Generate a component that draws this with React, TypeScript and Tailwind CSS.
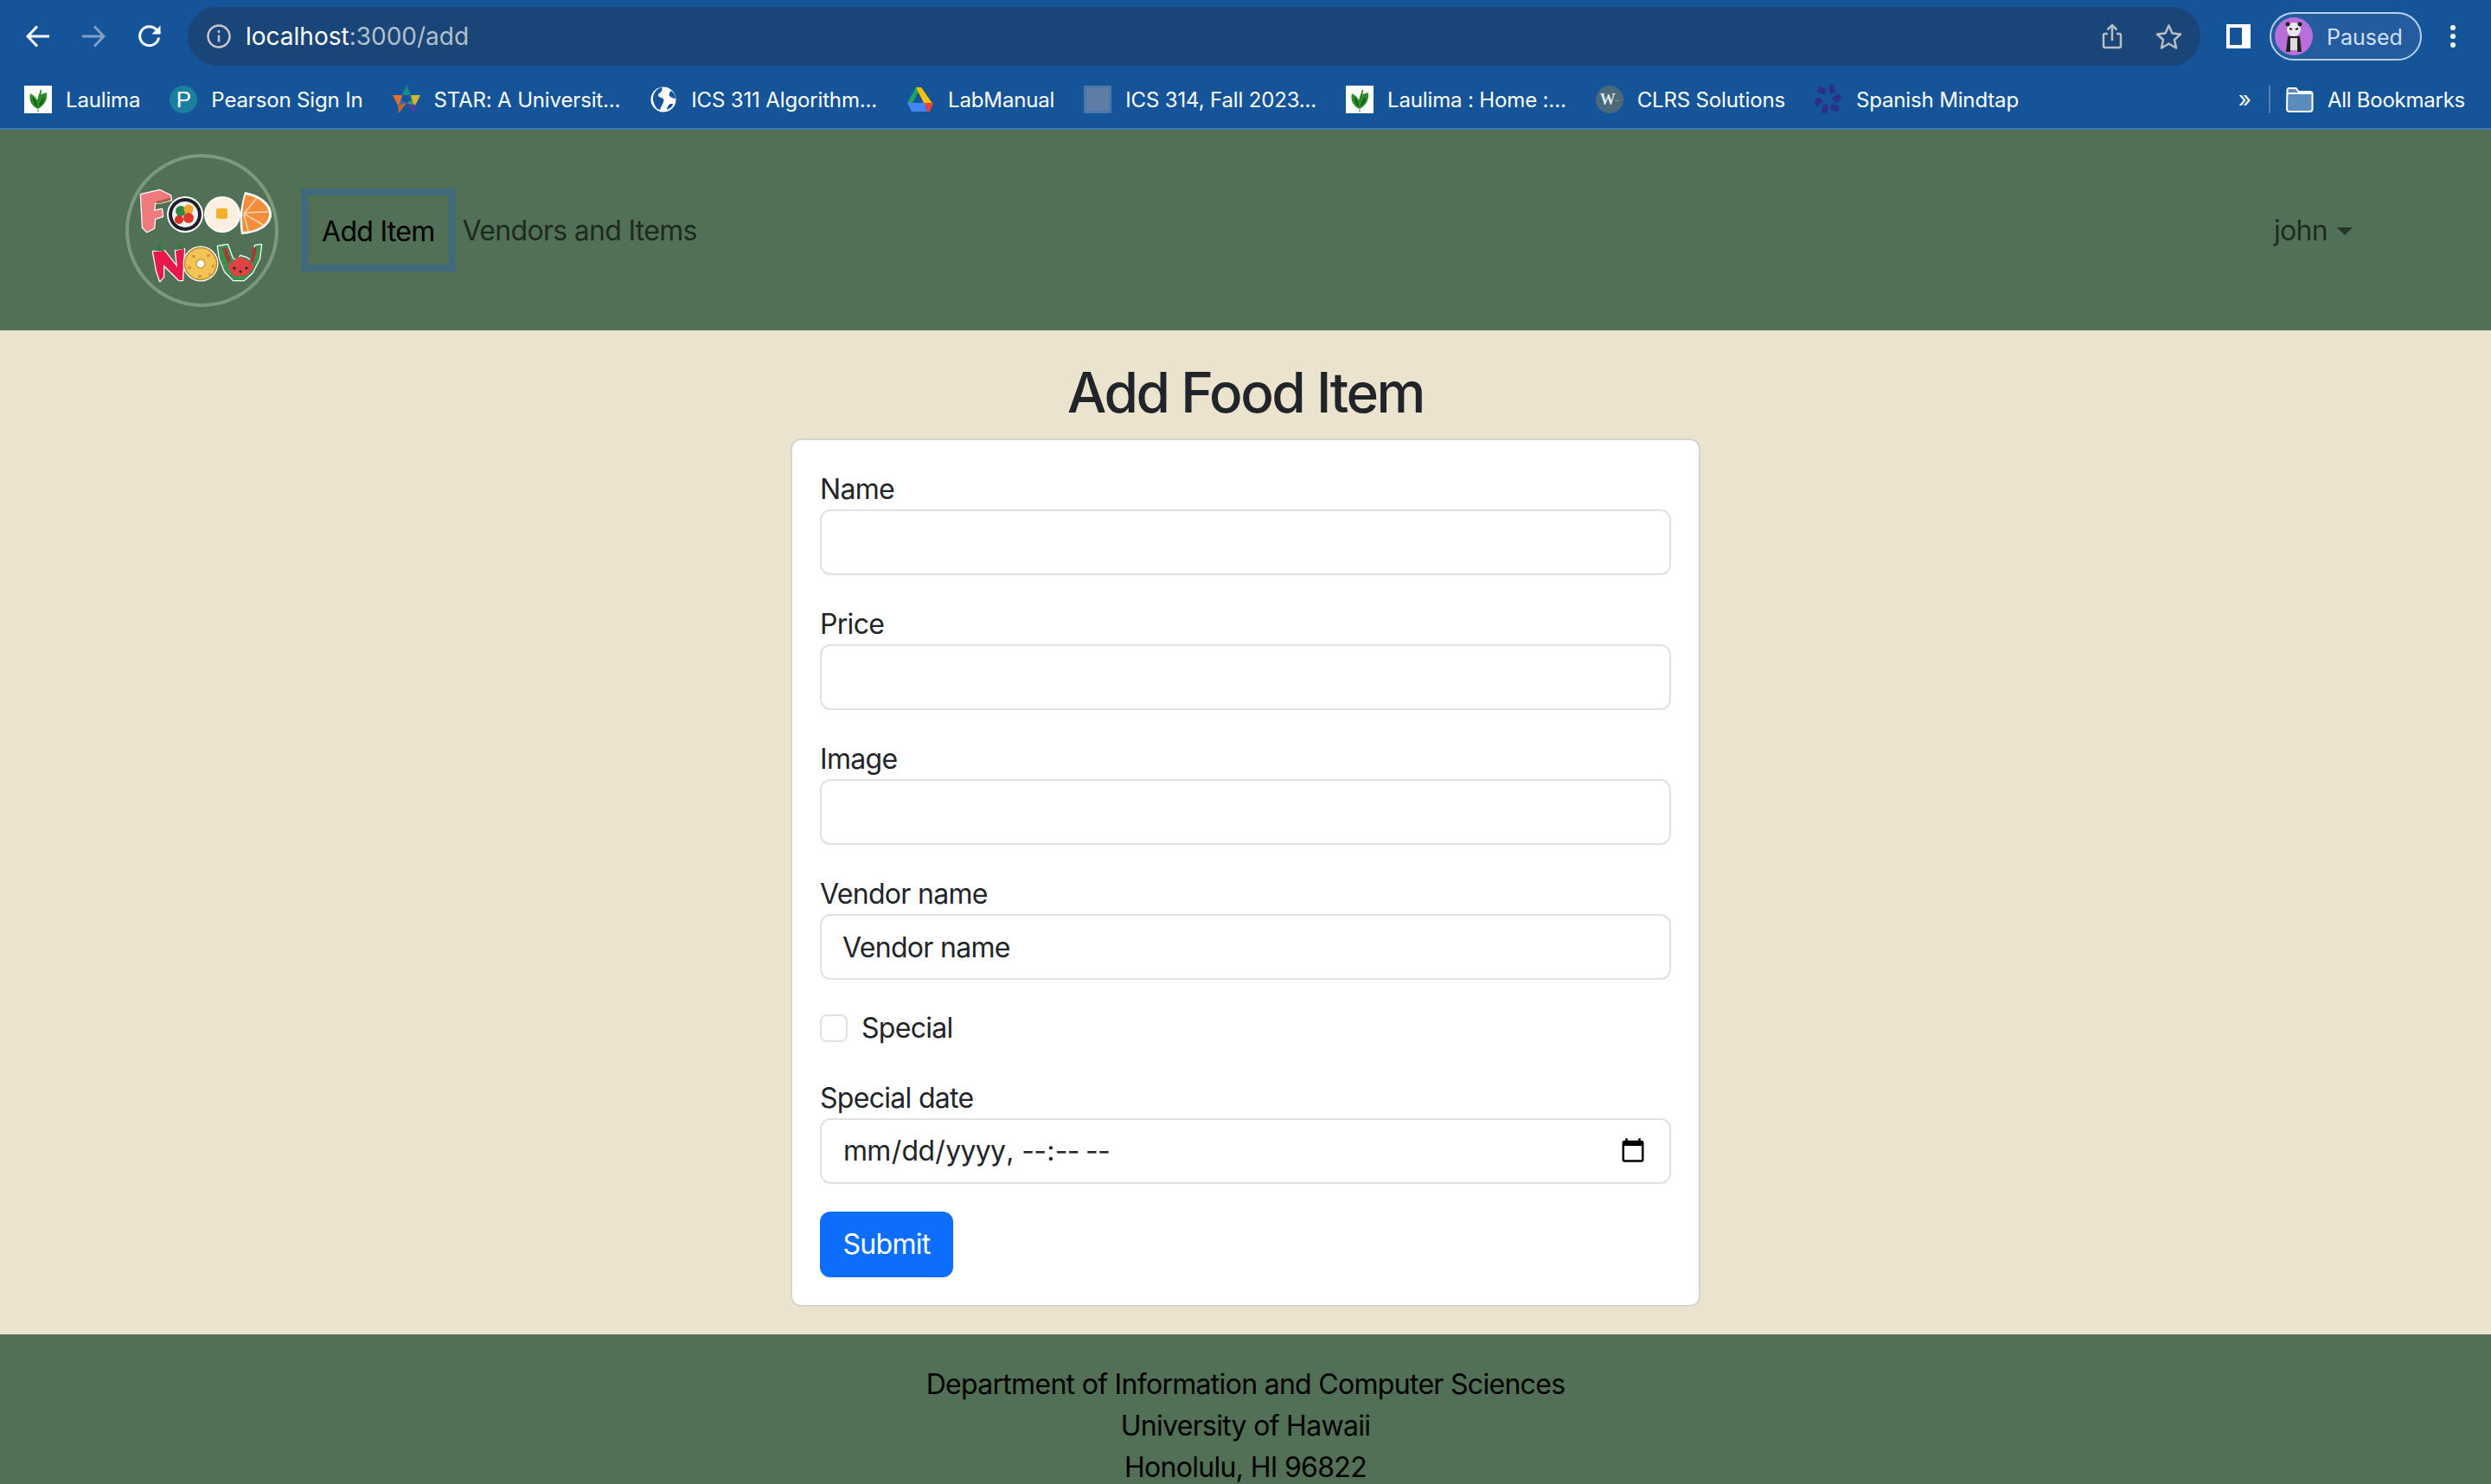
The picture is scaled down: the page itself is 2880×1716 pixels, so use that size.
import React from "react";

const Leaf = () => (
  <span className="flex h-8 w-8 shrink-0 items-center justify-center bg-white">
    <svg width="32" height="32" viewBox="0 0 32 32">
      <path d="M16 27C9 24 5 18 7 9c3 2 6 3 8 8 1-5 3-9 4-13 2 2 1 4 0 6 3-1 5-1 7-2 1 9-3 15-10 19z" fill="#2f8a2c" />
      <path d="M15 26c-3-4-5-9-5-13 3 3 5 7 5 13zM17 24c1-5 3-8 6-11 0 5-2 9-6 11z" fill="#14600f" />
      <path d="M16 26v5" stroke="#9dc79a" strokeWidth="2" />
    </svg>
  </span>
);
const Pearson = () => (
  <span className="flex h-8 w-8 shrink-0 items-center justify-center rounded-full bg-[#1b7f9f] font-['Liberation_Sans',sans-serif] text-[26px] leading-none text-white">P</span>
);
const Star = () => (
  <svg width="32" height="34" viewBox="0 0 32 34" className="shrink-0">
    <path d="M16 0l5 12H11z" fill="#1d8a8a" />
    <path d="M0 12h11l-2 9-3 3z" fill="#e0702c" />
    <path d="M32 12H21l2 9 3 3z" fill="#d9b52e" />
    <path d="M11 12l-3 10 2 3 6-4z" fill="#2f6fb5" />
    <path d="M21 12l3 10-2 3-6-4z" fill="#3f9a6a" />
    <path d="M6 24l10-3-9 12z" fill="#d0602c" />
    <path d="M26 24l-10-3 9 12z" fill="#5a3d9c" />
    <path d="M12 13h8l2 5-6 3-6-3z" fill="#15539a" />
  </svg>
);
const Globe = () => (
  <svg width="32" height="32" viewBox="0 0 32 32" className="shrink-0">
    <circle cx="16" cy="16" r="14.5" fill="#fff" />
    <path d="M14 2c2 3-1 6-3 7-2 2-1 4 2 5 3 0 4 2 3 5-1 3-3 5-4 9l-3-1c-4-5-5-9-5-12C4 9 8 4 14 2zM30 15c-2 0-5-1-7-3-1-2 0-4 2-6 3 2 5 5 5 9zM27 21c0 3-3 5-7 7 0-3 2-6 4-7z" fill="#15539a" />
  </svg>
);
const Drive = () => (
  <svg width="32" height="32" viewBox="0 0 32 32" className="shrink-0">
    <path d="M11 2h6L6 22 1 20z" fill="#1ea362" />
    <path d="M17 2l14 20h-10L11 2z" fill="#ffc107" />
    <path d="M1 20l5 10h18l-3-10z" fill="#4285f4" />
    <path d="M21 20h10l-4 10h-3z" fill="#ea4335" />
  </svg>
);
const SquareFav = () => (
  <span className="h-8 w-8 shrink-0 border-[3px] border-[#4c77a8] bg-[#5e7ea8]" />
);
const WFav = () => (
  <span className="flex h-8 w-8 shrink-0 items-center justify-center rounded-full bg-[#4a6a7a] font-['Liberation_Serif',serif] text-[18px] font-bold leading-none text-[#dde5ea]">W<span className="text-[8px] font-normal">..</span></span>
);
const Mindtap = () => (
  <svg width="32" height="36" viewBox="0 0 32 36" className="shrink-0" fill="#2c2f85">
    <rect x="4" y="4" width="9" height="7" transform="rotate(20 8 7)" />
    <rect x="17" y="1" width="6" height="10" transform="rotate(-10 20 6)" />
    <rect x="23" y="12" width="7" height="9" transform="rotate(45 26 16)" />
    <rect x="19" y="24" width="9" height="7" transform="rotate(20 23 27)" />
    <rect x="9" y="24" width="6" height="10" transform="rotate(10 12 29)" />
    <rect x="1" y="16" width="7" height="9" transform="rotate(45 4 20)" />
  </svg>
);

const bookmarks: [React.ReactNode, string][] = [
  [<Leaf />, "Laulima"],
  [<Pearson />, "Pearson Sign In"],
  [<Star />, "STAR: A Universit..."],
  [<Globe />, "ICS 311 Algorithm..."],
  [<Drive />, "LabManual"],
  [<SquareFav />, "ICS 314, Fall 2023..."],
  [<Leaf />, "Laulima : Home :..."],
  [<WFav />, "CLRS Solutions"],
  [<Mindtap />, "Spanish Mindtap"],
];

const Logo = () => (
  <svg width="177" height="177" viewBox="0 0 177 177" className="shrink-0">
    <circle cx="88.5" cy="88.5" r="86.5" fill="none" stroke="#7b9881" strokeWidth="4" />
    <g stroke="#fff" strokeWidth="2.5" strokeLinejoin="round" paintOrder="stroke">
      <path d="M18 47l22-5 12 6 1 5-11 3-8 1-1 9 9-2 1 8-9 3-1 11-8 4-5-5z" fill="#ef7a7e" />
      <path d="M52 52l-10 3-6 1" fill="none" stroke="#a9603f" strokeWidth="3" />
    </g>
    <g>
      <circle cx="69" cy="70" r="21" fill="#fff" />
      <circle cx="69" cy="70" r="19" fill="#20202a" />
      <circle cx="69" cy="70" r="15" fill="#eef0f2" />
      <circle cx="64" cy="66" r="6" fill="#2f8a3f" />
      <circle cx="73" cy="64" r="5.5" fill="#f0a62a" />
      <circle cx="73" cy="74" r="6" fill="#e03a2a" />
      <circle cx="62" cy="76" r="5" fill="#d8332a" />
      <circle cx="112" cy="70" r="21" fill="#fff" />
      <circle cx="112" cy="70" r="19" fill="#fbf0df" />
      <rect x="105" y="63" width="13" height="12" rx="2" fill="#f6ae2d" />
      <path d="M138 44C157 47 169 58 169 70c0 11-11 21-35 23-3-17-1-33 4-49z" fill="#fff" />
      <path d="M139 47C155 50 166 60 166 70c0 9-10 19-30 20-2-15-1-29 3-43z" fill="#f58e3c" />
      <path d="M137 68l28-1M137 69l22 13M137 69l14-17M137 70l5 19" stroke="#fcd9b5" strokeWidth="1.5" />
    </g>
    <g strokeLinejoin="round">
      <path d="M32 113l13-1 15 19-2-19 10-2-1 18-1 18h-4L44 128v14l-4 5-4-12z" fill="#e8174c" stroke="#fff" strokeWidth="2.5" paintOrder="stroke" />
      <path d="M34 112l4-4 1-5 2 0 1 5 3 4zM58 111l4-4 0-5 2 0 1 5 3 3z" fill="#2e7d3a" />
      <circle cx="87" cy="127" r="20.5" fill="#fff" />
      <circle cx="87" cy="127" r="18.5" fill="#f1c454" stroke="#b98a2f" strokeWidth="1.5" />
      <circle cx="87" cy="127" r="5" fill="#fff" stroke="#c99a3a" strokeWidth="1.5" />
      <path d="M77 117h4v3h-4zM94 116h4v3h-4zM100 128h3v4h-3zM72 130h4v3h-4zM84 140h4v3h-4zM96 138h3v3h-3z" fill="#d29a3a" />
      <path d="M107 107l11-2 6 16 6 3 3-6 7 2 6 4 4-18 7-1-2 16-8 16-10 9h-12l-10-10-6-15z" fill="#3e8f4f" stroke="#fff" strokeWidth="2.5" paintOrder="stroke" />
      <path d="M112 109l5 0 5 15-4 2zM152 108l-4 0-4 16 4 2z" fill="#a83a34" />
      <path d="M118 130l8-7 5-4 8 2 7 6 3 3-8 10-6 1h-10z" fill="#dd4343" />
      <circle cx="126" cy="132" r="1.6" fill="#222" /><circle cx="133" cy="136" r="1.6" fill="#222" /><circle cx="140" cy="132" r="1.6" fill="#222" />
    </g>
  </svg>
);

const Field = ({ label, value, type = "text" }: { label: string; value?: string; type?: string }) => (
  <div className="mb-8">
    <label className="block h-[48px] pt-[2px] text-[32px] leading-[46px]">{label}</label>
    <input
      type={type}
      defaultValue={value}
      readOnly={type === "text"}
      className="block h-[76px] w-full rounded-[12px] border-2 border-[#dee2e6] bg-white px-[24px] text-[32px] leading-[48px] text-[#212529] outline-none"
    />
  </div>
);

export default function App() {
  return (
    <div className="flex h-[1716px] flex-col overflow-hidden bg-[#ebe3cd] font-['Inter','Liberation_Sans',sans-serif] tracking-[-0.7px] text-[#212529]">
      <header className="bg-[#155499] tracking-normal text-white">
        <div className="flex h-[84px] items-center">
          <div className="flex w-[217px] shrink-0 items-center pl-[30px]">
            <svg width="28" height="26" viewBox="0 0 28 26" fill="none" stroke="#fff" strokeWidth="3"><path d="M27 13H2M13 1.5L2 13l11 11.5" /></svg>
            <svg className="ml-[36px]" width="28" height="26" viewBox="0 0 28 26" fill="none" stroke="#7f9fc9" strokeWidth="3"><path d="M1 13h25M15 1.5L26 13 15 24.5" /></svg>
            <svg className="ml-[37px]" width="28" height="28" viewBox="0 0 28 28" fill="none" stroke="#fff" strokeWidth="3"><path d="M24.5 15.5a11 11 0 1 1-3-9.5L26 10.5" /><path d="M26.5 1.500v10h-10z" fill="#fff" stroke="none" /></svg>
          </div>
          <div className="flex h-[68px] w-[2327px] shrink-0 items-center rounded-full bg-[#1a4578] pl-[22px] pr-[21px]">
            <svg width="28" height="28" viewBox="0 0 28 28" fill="none" stroke="#c3c6ca" strokeWidth="2.5"><circle cx="14" cy="14" r="12.5" /><path d="M14 12.5v8M14 7v3" /></svg>
            <span className="ml-[17px] text-[28px] leading-none"><span className="text-white">localhost</span><span className="text-[#b4bfcc]">:3000/add</span></span>
            <span className="flex-1" />
            <svg width="24" height="30" viewBox="0 0 24 30" fill="none" stroke="#b9bec5" strokeWidth="2.5"><path d="M7 12H4a2 2 0 0 0-2 2v12a2 2 0 0 0 2 2h16a2 2 0 0 0 2-2V14a2 2 0 0 0-2-2h-3M12 20V2M6.5 7.5L12 2l5.500 5.500" /></svg>
            <svg className="ml-[38px]" width="31" height="30" viewBox="0 0 31 30" fill="none" stroke="#b9bec5" strokeWidth="2.5" strokeLinejoin="round"><path d="M15.500 2.500l4 9 9.500 1-7 6.500 2 9.500-8.500-5-8.500 5 2-9.500-7-6.500 9.500-1z" /></svg>
          </div>
          <div className="ml-[30px] h-7 w-7 shrink-0 border-y-4 border-l-4 border-r-[10px] border-white" />
          <div className="ml-[22px] flex h-[56px] w-[176px] shrink-0 items-center rounded-full border-2 border-[#b9d0ef] bg-[#245c9f] pl-[4px]">
            <svg width="44" height="44" viewBox="0 0 44 44" className="shrink-0">
              <circle cx="22" cy="22" r="22" fill="#b96fd8" />
              <circle cx="22" cy="14" r="8" fill="#e8e8e8" />
              <circle cx="15" cy="8" r="2.500" fill="#222" /><circle cx="29" cy="8" r="2.500" fill="#222" />
              <path d="M17 13l3 1M27 13l-3 1" stroke="#222" strokeWidth="2" />
              <path d="M15 22h14l2 18h-5v-2h-8v2h-5z" fill="#222" />
              <rect x="18" y="24" width="8" height="14" fill="#ddd" />
            </svg>
            <span className="ml-[16px] pt-[2px] text-[25px] leading-none text-[#cfe0f8]">Paused</span>
          </div>
          <div className="ml-[33px] flex flex-col gap-[4px]">
            <span className="h-[6px] w-[6px] rounded-full bg-white" />
            <span className="h-[6px] w-[6px] rounded-full bg-white" />
            <span className="h-[6px] w-[6px] rounded-full bg-white" />
          </div>
        </div>
        <div className="flex h-[66px] items-center border-b-2 border-[#3c74b4] pb-[2px] pl-[28px] pr-[30px]">
          <div className="flex items-center gap-[34px]">
            {bookmarks.map(([icon, text], i) => (
              <div key={i} className="flex items-center gap-[16px]">
                {icon}
                <span className="whitespace-nowrap pt-[2px] text-[24px] leading-none tracking-[-0.15px]">{text}</span>
              </div>
            ))}
          </div>
          <span className="flex-1" />
          <span className="text-[26px] leading-none">»</span>
          <span className="ml-[20px] h-8 w-[2px] bg-[#4f7db4]" />
          <svg className="ml-[18px]" width="32" height="30" viewBox="0 0 32 30">
            <path d="M1.500 4a2 2 0 0 1 2-2h8l3 4h13a3 3 0 0 1 3 3v17a3 3 0 0 1-3 3H4a3 3 0 0 1-3-3z" fill="#5d8abd" stroke="#fff" strokeWidth="2" />
            <path d="M2 8h28" stroke="#fff" strokeWidth="2" />
          </svg>
          <span className="ml-[16px] whitespace-nowrap pt-[2px] text-[24px] leading-none tracking-[-0.25px]">All Bookmarks</span>
        </div>
      </header>

      <nav className="flex h-[232px] shrink-0 items-center bg-[#527055] pl-[145px] pr-[160px] text-[32px] leading-[48px]">
        <Logo />
        <a className="ml-[26px] border-[8px] border-[#3f6a7c] px-[16px] pb-[14px] pt-[18px] leading-[48px] text-black">Add Item</a>
        <a className="ml-[8px] pt-[2px] text-black/65">Vendors and Items</a>
        <span className="flex-1" />
        <a className="flex items-center pt-[2px] text-black/65">
          john
          <span className="ml-[11px] h-0 w-0 border-x-[9px] border-t-[9px] border-x-transparent border-t-[#26352a]" />
        </a>
      </nav>

      <main className="flex flex-col items-center">
        <h1 className="mt-[33px] h-[92px] text-[64px] font-medium leading-[77px] tracking-[-2.5px]">Add Food Item</h1>
        <form className="mb-8 w-[1052px] rounded-[12px] border-2 border-[#d6d4cf] bg-white px-[32px] pb-0 pt-[32px]">
          <Field label="Name" />
          <Field label="Price" />
          <Field label="Image" />
          <Field label="Vendor name" value="Vendor name" />
          <div className="mb-8 flex h-[48px] items-center">
            <span className="h-8 w-8 rounded-[8px] border-2 border-[#dee2e6] bg-white" />
            <span className="ml-4 text-[32px] leading-[48px]">Special</span>
          </div>
          <Field label="Special date" type="datetime-local" />
          <button type="button" className="mb-8 block h-[76px] w-[154px] rounded-[12px] bg-[#0d6efd] text-[32px] leading-[48px] text-white">Submit</button>
        </form>
      </main>

      <footer className="flex-1 bg-[#527055] pt-[34px] text-center text-[32px] leading-[48px] text-black">
        <div>Department of Information and Computer Sciences</div>
        <div>University of Hawaii</div>
        <div>Honolulu, HI 96822</div>
      </footer>
    </div>
  );
}
